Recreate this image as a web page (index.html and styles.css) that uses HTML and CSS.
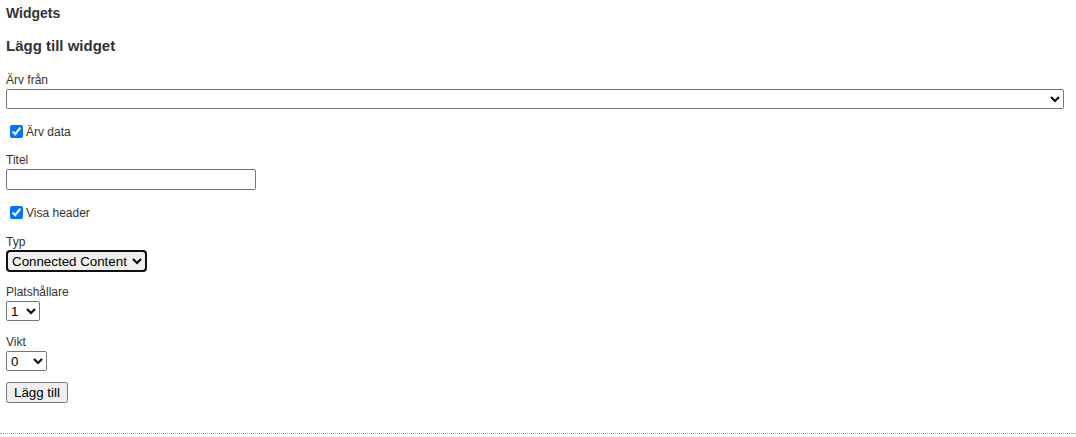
FILE: index.html
```html
<!DOCTYPE html>
<html lang="sv">
<head>
  <meta charset="UTF-8">
  <title>Widgets</title>
  <meta name="viewport" content="width=device-width, initial-scale=1.0">
  <link rel="stylesheet" href="styles.css">
</head>
<body>

<div class="panel">
  <h2 class="panel-title">Widgets</h2>
  <h3 class="form-title">Lägg till widget</h3>

  <form class="widget-form">
    <div class="field">
      <label for="inherit">Ärv från</label>
      <select id="inherit" class="wide"><option></option></select>
    </div>
    <div class="check tight">
      <input type="checkbox" id="inheritData" checked>
      <label for="inheritData">Ärv data</label>
    </div>
    <div class="field">
      <label for="title">Titel</label>
      <input type="text" id="title" class="text">
    </div>
    <div class="check">
      <input type="checkbox" id="showHeader" checked>
      <label for="showHeader">Visa header</label>
    </div>
    <div class="field loose">
      <label for="type">Typ</label>
      <select id="type" class="active">
        <option>Connected Content</option>
        <option>Text</option>
        <option>Bild</option>
      </select>
    </div>
    <div class="field loose">
      <label for="slot">Platshållare</label>
      <select id="slot" class="slot">
        <option>1</option>
        <option>2</option>
        <option>3</option>
      </select>
    </div>
    <div class="field last">
      <label for="weight">Vikt</label>
      <select id="weight" class="weight">
        <option>0</option>
        <option>10</option>
        <option>20</option>
      </select>
    </div>
    <button type="button">Lägg till</button>
  </form>
</div>

<hr class="divider">

</body>
</html>
```

FILE: styles.css
```css
body { margin: 0; font-family: "Liberation Sans", Arial, sans-serif; color: #333; background: #fff; }
.panel { padding: 0 6px; }
.panel-title { font-size: 14px; margin: 0; padding-top: 5px; line-height: 16px; }
.form-title { font-size: 15px; margin: 16px 0 0; line-height: 18px; }

.widget-form { margin-top: 18px; font-size: 12px; }
.field { margin-bottom: 13px; }
.field.loose { margin-bottom: 14px; }
.field.last { margin-bottom: 11px; }
.field label { display: block; line-height: 14px; margin-bottom: 2px; }
.check { display: flex; align-items: center; margin-bottom: 13px; }
.check.tight { margin-bottom: 12px; }
.check label { margin-top: 1px; }

select, input.text, button { font-family: Arial, "Liberation Sans", sans-serif; }
select { height: 20px; box-sizing: border-box; }
select.wide { width: calc(100% - 6px); }
select.slot { width: 34px; }
select.weight { width: 41px; }
input.text { width: 250px; height: 21px; box-sizing: border-box; }
select.active { width: 139px; margin-left: 1px; outline: 2px solid #101010; outline-offset: -1px; border-radius: 3px; }

.divider { border: 0; border-top: 1px dotted #999; margin: 30px 0 0; }
```
